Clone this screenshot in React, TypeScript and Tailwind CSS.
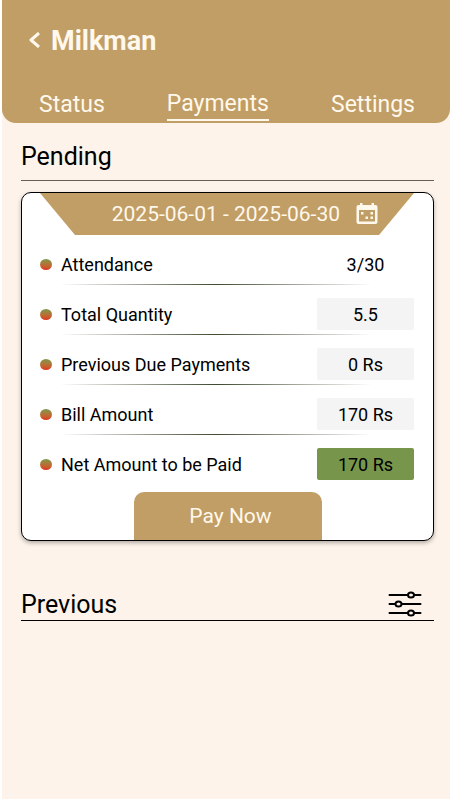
const bills = [
    { label: 'Attendance', value: '3/30', box: '' },
    { label: 'Total Quantity', value: '5.5', box: 'bg-[#f4f4f4]' },
    { label: 'Previous Due Payments', value: '0 Rs', box: 'bg-[#f4f4f4]' },
    { label: 'Bill Amount', value: '170 Rs', box: 'bg-[#f4f4f4]' },
    { label: 'Net Amount to be Paid', value: '170 Rs', box: 'bg-[#77964b]' },
]

const BackIcon = () => (
    <svg width="12" height="16" viewBox="0 0 12 16" fill="none" stroke="currentColor" strokeWidth="3" strokeLinejoin="round" aria-hidden="true">
        <path d="M11 1 3 8l8 7" />
    </svg>
)

const CalendarIcon = () => (
    <svg width="22" height="22" viewBox="0 0 22 22" fill="none" aria-hidden="true">
        <path
            fill="currentColor"
            fillRule="evenodd"
            d="M4 0h2.500v2h9V0H18v2h1.500a2 2 0 0 1 2 2v15a2 2 0 0 1-2 2h-17a2 2 0 0 1-2-2V4a2 2 0 0 1 2-2H4zM3 7v11.500h16V7z"
        />
        <path fill="currentColor" d="M5 9h2.500v2.500H5zM14.500 9H17v2.500h-2.500zM9.500 13.500H12V16H9.500zM14.500 13.500H17V16h-2.500z" />
    </svg>
)

const FilterIcon = () => (
    <svg width="34" height="26" viewBox="0 0 34 26" fill="none" stroke="currentColor" strokeWidth="2" strokeLinecap="round" aria-hidden="true">
        <path d="M1.500 4H32.500M1.500 13H32.500M1.500 22H32.500" />
        <g fill="#fdf3ea">
            <ellipse cx="23" cy="4" rx="3" ry="2.500" />
            <ellipse cx="10.500" cy="13" rx="3" ry="2.500" />
            <ellipse cx="23" cy="22" rx="3" ry="2.500" />
        </g>
    </svg>
)

const Header = () => (
    <header className="rounded-b-[14px] bg-[#c19e65] px-6 pt-[25px] text-[#fff8ec]">
        <div className="flex items-center gap-2">
            <button type="button" aria-label="Back" className="flex h-8 w-4 items-center justify-center pb-0.5">
                <BackIcon />
            </button>
            <h1 className="pl-px text-[27px] leading-8 font-bold">Milkman</h1>
        </div>
        <nav className="flex items-start justify-between pt-8 pr-[11px] pb-0.5 pl-[13px] text-[23px] leading-8">
            <a href="#status">Status</a>
            <a href="#payments" aria-current="page" className="border-b-2 border-[#fff8ec] leading-[30px]">
                Payments
            </a>
            <a href="#settings">Settings</a>
        </nav>
    </header>
)

const PendingCard = () => (
    <article className="mt-[11px] overflow-hidden rounded-[10px] border border-black bg-white shadow-[0_2px_4px_rgba(0,0,0,0.3)]">
        <div className="mr-[19px] ml-[18px] flex h-[42px] items-center justify-end gap-4 bg-[#c19e65] pr-9 text-[#fff8ec] [clip-path:polygon(0_0,100%_0,calc(100%-35px)_100%,35px_100%)]">
            <p className="text-[21px] leading-8">2025-06-01 - 2025-06-30</p>
            <CalendarIcon />
        </div>
        <dl className="mr-[19px] ml-[18px] pt-3">
            {bills.map((bill, i) => (
                <div key={bill.label}>
                    <div className="flex h-[34px] items-center">
                        <span className="h-[11px] w-3 rounded-[50%] bg-linear-to-b from-[#75974b] to-[#e0301e]" />
                        <dt className="ml-[9px] flex-1 pt-px text-lg">{bill.label}</dt>
                        <dd className={`flex h-8 w-[97px] items-center justify-center rounded-xs pt-px text-lg ${bill.box}`}>{bill.value}</dd>
                    </div>
                    {i < bills.length - 1 && (
                        <div className="mt-[3px] mr-[42px] mb-3 ml-5 h-px bg-linear-to-r from-transparent via-[#3f4a30] to-transparent" />
                    )}
                </div>
            ))}
        </dl>
        <button
            type="button"
            className="mx-auto mt-[11px] block h-12 w-[188px] rounded-t-[10px] bg-[#c19e65] pt-0.5 pl-1.5 text-[21px] text-[#fff8ec]"
        >
            Pay Now
        </button>
    </article>
)

export default function App() {
    return (
        <div className="min-h-screen border-b border-l-2 border-white bg-[#fdf3ea] font-['Roboto',sans-serif] text-black">
            <Header />
            <main className="mr-4 ml-[19px] pt-[18px]">
                <section>
                    <h2 className="border-b border-[#665d57] pb-[7px] text-[25px] leading-8">Pending</h2>
                    <PendingCard />
                </section>
                <section className="pt-[47px]">
                    <div className="flex items-center justify-between border-b border-black pr-3">
                        <h2 className="pt-0.5 text-[25px] leading-[30px]">Previous</h2>
                        <button type="button" aria-label="Filter">
                            <FilterIcon />
                        </button>
                    </div>
                </section>
            </main>
        </div>
    )
}
